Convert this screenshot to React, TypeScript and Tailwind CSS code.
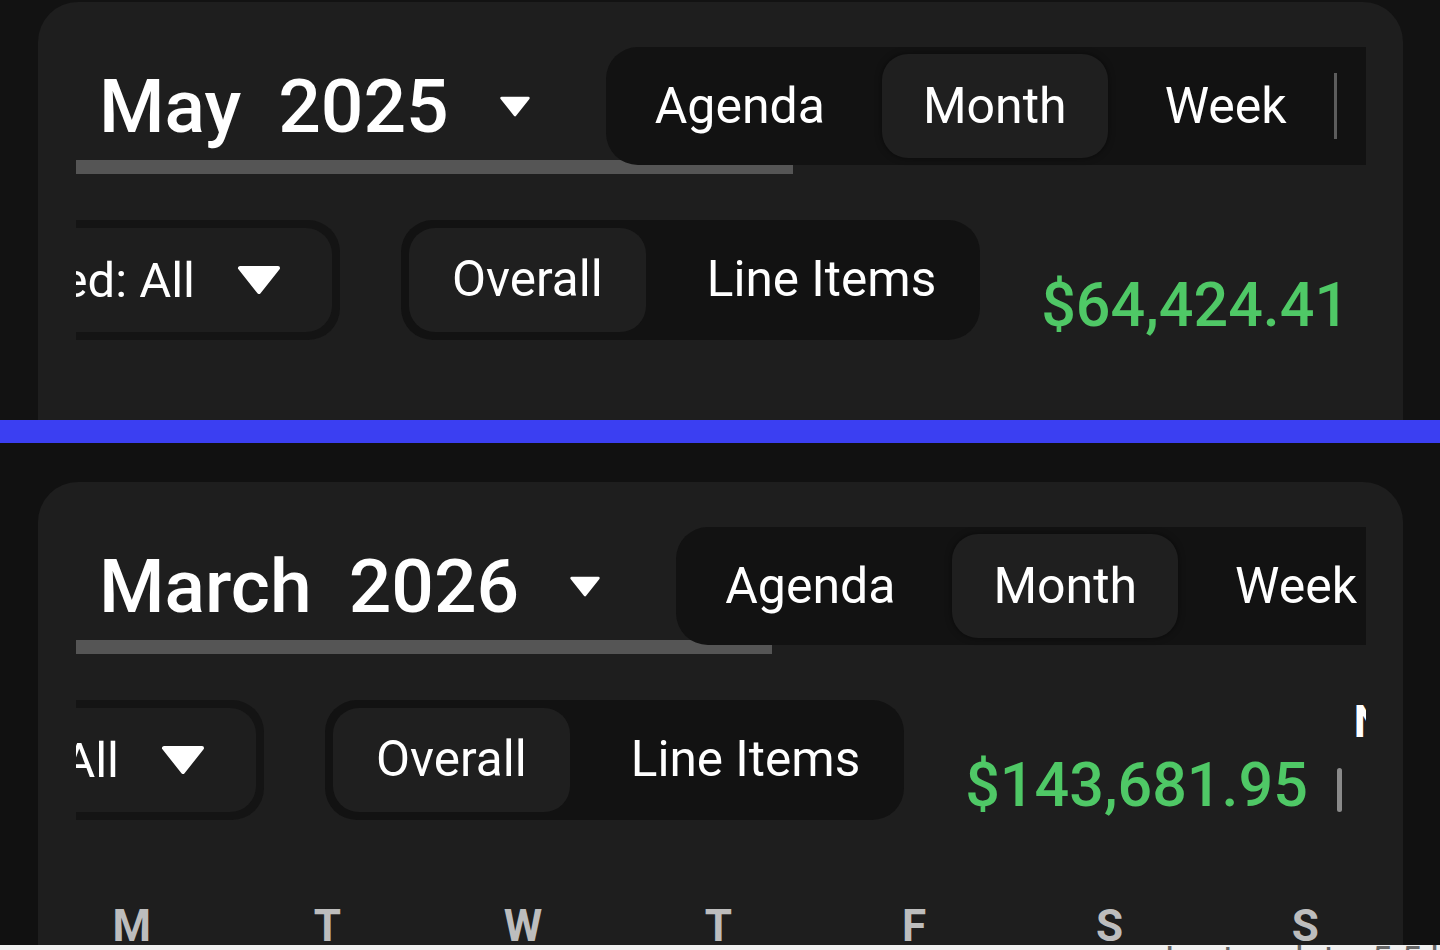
import React from 'react';

interface CardProps {
    month: string;
    year: string;
    amount: string;
    scrollOffset: string;
    barWidth: string;
    showWeekdays?: boolean;
}

const Caret = ({ className }: { className: string }) => (
    <svg className={className} viewBox="0 0 44 30" fill="#ffffff">
        <polygon points="3,3 41,3 22,27" stroke="#ffffff" strokeWidth={4} strokeLinejoin="round" />
    </svg>
);

const Tab = ({ label, active }: { label: string; active?: boolean }) => (
    <div
        className={
            'flex h-[104px] shrink-0 items-center rounded-[26px] px-[41px] text-[50px] leading-none text-white ' +
            (active ? 'bg-[#1f1f1f] shadow-[0_0_6px_rgba(0,0,0,0.5)]' : '')
        }
    >
        {label}
    </div>
);

const WEEKDAYS = ['M', 'T', 'W', 'T', 'F', 'S', 'S'];

const CalendarCard: React.FC<CardProps> = ({ month, year, amount, scrollOffset, barWidth, showWeekdays }) => {
    return (
        <div className="rounded-[40px] bg-[#1e1e1e] pt-[45px] pb-[200px]">
            {/* Header: month picker + view tabs */}
            <div className="ml-[38px] mr-[37px] overflow-hidden">
                <div className="flex h-[118px] items-center">
                    <div className="flex shrink-0 items-center pl-[23px] text-[75px] font-medium leading-none text-white">
                        <span>{month}</span>
                        <span className="ml-[37px]">{year}</span>
                        <Caret className="ml-[48px] h-[21px] w-[36px]" />
                    </div>
                    <div className="ml-[73px] flex h-[118px] shrink-0 items-center gap-[16px] rounded-l-[32px] bg-[#121212] p-[8px]">
                        <Tab label="Agenda" />
                        <Tab label="Month" active />
                        <Tab label="Week" />
                        <div className="-ml-[10px] h-[66px] w-[3px] bg-[#5c5c5c]" />
                        <Tab label="Day" />
                    </div>
                </div>
                <div className={'-mt-[5px] h-[14px] bg-[#555555] ' + barWidth} />
            </div>

            {/* Filters + total */}
            <div className="mt-[46px] ml-[38px] mr-[37px] h-[120px] overflow-hidden">
                <div className={'flex items-start ' + scrollOffset}>
                    <div className="h-[120px] w-[421px] shrink-0 rounded-[32px] bg-[#141414] p-[8px]">
                        <div className="flex h-full items-center justify-end gap-[42px] rounded-[26px] bg-[#1e1e1e] pr-[51px] text-[49px] leading-none text-white">
                            <span className="whitespace-nowrap">Posted: All</span>
                            <Caret className="h-[30px] w-[44px]" />
                        </div>
                    </div>
                    <div className="ml-[61px] flex h-[120px] shrink-0 items-center gap-[18px] rounded-[32px] bg-[#121212] p-[8px]">
                        <div className="flex h-[104px] items-center rounded-[26px] bg-[#1f1f1f] px-[43px] text-[49.5px] leading-none text-white">
                            Overall
                        </div>
                        <div className="flex h-[104px] items-center pl-[43px] pr-[36px] text-[49.5px] leading-none whitespace-nowrap text-white">
                            Line Items
                        </div>
                    </div>
                    <div className="ml-[61px] mt-[55px] shrink-0 text-[61px] font-medium leading-none text-[#4fc866]">
                        {amount}
                    </div>
                    <div className="ml-[29px] mt-[68px] h-[44px] w-[5px] shrink-0 rounded-full bg-[#8a8a8a]" />
                    <div className="ml-[12px] shrink-0 text-[44px] font-bold leading-none text-white">Net</div>
                </div>
            </div>

            {showWeekdays && (
                <div className="mt-[84px] -ml-[4px] grid grid-cols-7">
                    {WEEKDAYS.map((d, i) => (
                        <div key={i} className="text-center text-[44px] font-bold leading-none text-[#bdbdbd]">
                            {d}
                        </div>
                    ))}
                </div>
            )}
        </div>
    );
};

export default function App() {
    return (
        <div className="h-[950px] w-[1440px] overflow-hidden bg-[#121212] font-['Roboto',sans-serif]">
            <section className="h-[420px] overflow-hidden pt-[2px] pl-[38px] pr-[37px]">
                <CalendarCard
                    month="May"
                    year="2025"
                    amount="$64,424.41"
                    scrollOffset="-ml-[157px]"
                    barWidth="w-[717px]"
                />
            </section>
            <div className="h-[23px] bg-[#3b3ff2]" />
            <section className="h-[502px] overflow-hidden bg-[#111111] pt-[39px] pl-[38px] pr-[37px]">
                <CalendarCard
                    month="March"
                    year="2026"
                    amount="$143,681.95"
                    scrollOffset="-ml-[233px]"
                    barWidth="w-[696px]"
                    showWeekdays
                />
            </section>
            <div className="h-[5px] overflow-hidden bg-[#f1f1f1] pl-[1165px]">
                <div className="-mt-[3px] whitespace-nowrap text-[36px] leading-none text-[#666666]">
                    Last update: 5.5 hours ago
                </div>
            </div>
        </div>
    );
}
